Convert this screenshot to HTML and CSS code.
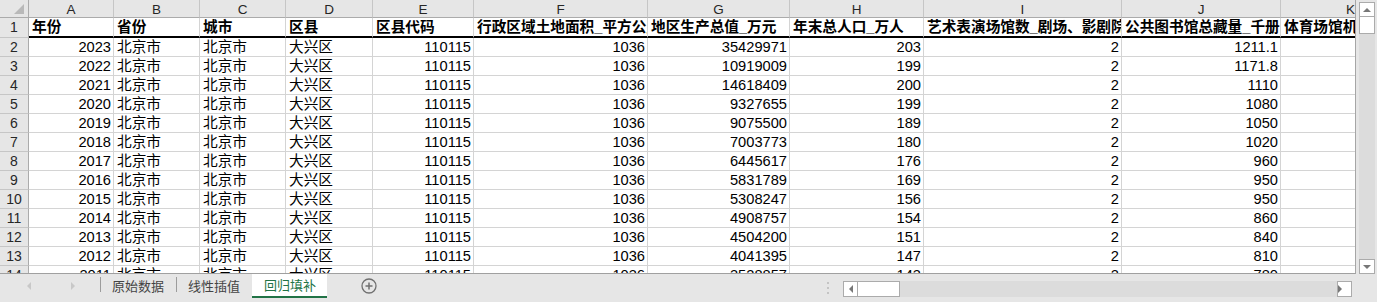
FILE: index.html
```html
<!DOCTYPE html>
<html lang="zh-CN">
<head>
<meta charset="UTF-8" />
<meta name="viewport" content="width=device-width,initial-scale=1.0" />
<title>回归填补</title>
<link rel="stylesheet" href="styles.css">
</head>
<body>
  <div class="main">
    <div class="grid" id="grid">
      <div class="row colhdr" id="colhdr">
        <div class="corner"><span class="tri"></span></div>
      </div>
    </div>
    <div class="vscroll">
      <div class="vtrack">
        <div class="sbtn"><span class="arr up"></span></div>
        <div class="vthumb"></div>
        <div class="fill"></div>
        <div class="sbtn"><span class="arr down"></span></div>
      </div>
    </div>
  </div>

  <div class="tabbar">
    <div class="nav">
      <span class="arr left dim"></span>
      <span class="arr right dim"></span>
    </div>
    <div class="sep"></div>
    <div class="tab">原始数据</div>
    <div class="sep"></div>
    <div class="tab">线性插值</div>
    <div class="tab active">回归填补</div>
    <div class="add">
      <svg width="16" height="16" viewBox="0 0 16 16">
        <circle cx="8" cy="8" r="7" fill="none" stroke="#707070" stroke-width="1.3"/>
        <path d="M8 4.5v7M4.5 8h7" stroke="#707070" stroke-width="1.5"/>
      </svg>
    </div>
    <div class="right">
      <div class="dots"><i></i><i></i><i></i></div>
      <div class="hscroll">
        <div class="sbtn"><span class="arr left"></span></div>
        <div class="hthumb"></div>
        <div class="fill"></div>
        <div class="sbtn"><span class="arr right"></span></div>
      </div>
    </div>
  </div>

<script>
  const letters = ['A','B','C','D','E','F','G','H','I','J','K'];
  const heads = ['年份','省份','城市','区县','区县代码','行政区域土地面积_平方公里','地区生产总值_万元',
    '年末总人口_万人','艺术表演场馆数_剧场、影剧院数_个','公共图书馆总藏量_千册','体育场馆机构数_个'];
  // 年份, 地区生产总值, 总人口, 图书馆藏量
  const data = [
    [2023, 35429971, 203, '1211.1'],
    [2022, 10919009, 199, '1171.8'],
    [2021, 14618409, 200, 1110],
    [2020, 9327655, 199, 1080],
    [2019, 9075500, 189, 1050],
    [2018, 7003773, 180, 1020],
    [2017, 6445617, 176, 960],
    [2016, 5831789, 169, 950],
    [2015, 5308247, 156, 950],
    [2014, 4908757, 154, 860],
    [2013, 4504200, 151, 840],
    [2012, 4041395, 147, 810],
    [2011, 3528857, 143, 780]
  ];

  const grid = document.getElementById('grid');
  const colhdr = document.getElementById('colhdr');

  function cell(text, cls) {
    const d = document.createElement('div');
    d.className = cls;
    d.textContent = text;
    return d;
  }

  letters.forEach(l => colhdr.appendChild(cell(l, 'ch')));

  const head = document.createElement('div');
  head.className = 'row first';
  head.appendChild(cell(1, 'rh'));
  heads.forEach(h => head.appendChild(cell(h, 'c hd')));
  grid.appendChild(head);

  data.forEach((r, i) => {
    const row = document.createElement('div');
    row.className = 'row';
    row.appendChild(cell(i + 2, 'rh'));
    const vals = [r[0], '北京市', '北京市', '大兴区', 110115, 1036, r[1], r[2], 2, r[3], ''];
    vals.forEach(v => row.appendChild(cell(v, typeof v === 'string' && isNaN(v) ? 'c' : 'c num')));
    grid.appendChild(row);
  });
</script>
</body>
</html>
```

FILE: styles.css
```css
* { box-sizing:border-box; }
body { margin:0; width:1377px; height:302px; overflow:hidden; background:#e6e6e6; font-family:"Liberation Sans", "Noto Sans CJK SC", sans-serif; color:#000; }

.main { display:flex; height:274px; }
.grid { flex:1; overflow:hidden; background:#fff; border-right:1px solid #a6a6a6; border-bottom:1px solid #a0a0a0; }
.row { display:grid; grid-template-columns:29px 85px 86px 86px 87px 101px 174px 142px 134px 198px 159px 140px; height:19px; }
.row > div { border-right:1px solid #d4d4d4; border-bottom:1px solid #d4d4d4; overflow:hidden; white-space:nowrap; }
.row.colhdr { height:18px; }
.row.first { height:20px; }

.row .corner { position:relative; background:#e6e6e6; border-right-color:#ababab; border-bottom-color:#ababab; }
.tri { position:absolute; right:4px; bottom:3px; width:0; height:0; border-left:10px solid transparent; border-bottom:10px solid #b9b9b9; }
.row .ch { background:#e6e6e6; border-right-color:#c6c6c6; border-bottom-color:#ababab; text-align:center; font-size:13.5px; line-height:19px; color:#262626; }
.row .rh { background:#e6e6e6; border-right-color:#ababab; border-bottom-color:#c6c6c6; text-align:center; font-size:14px; line-height:19px; color:#262626; }

.c { padding:0 2px 0 3px; font-size:14.67px; line-height:18px; }
.num { text-align:right; }
.row .hd { font-weight:700; border-bottom:2px solid #000; }

.vscroll { width:21px; padding:2px 2px 0 3px; background:#e6e6e6; }
.vtrack { height:100%; display:flex; flex-direction:column; background:#dcdcdc; }
.vscroll .sbtn { height:15px; }
.vthumb { height:17px; background:#fff; border:1px solid #ababab; border-top:none; }
.fill { flex:1; }
.sbtn { display:grid; place-items:center; background:#fff; border:1px solid #ababab; }

.arr { width:0; height:0; border:4px solid transparent; }
.arr.up { border-bottom-color:#777; border-top-width:0; }
.arr.down { border-top-color:#777; border-bottom-width:0; }
.arr.left { border-right-color:#777; border-left-width:0; }
.arr.right { border-left-color:#777; border-right-width:0; }
.arr.dim.left { border-right-color:#c8c8c8; }
.arr.dim.right { border-left-color:#c8c8c8; }

.tabbar { display:flex; height:28px; font-family:"Liberation Sans", "Noto Sans CJK SC", sans-serif; }
.nav { width:100px; display:flex; align-items:center; gap:24px; padding:0 0 4px 27px; }
.sep { width:1px; height:15px; margin-top:3px; background:#9c9c9c; }
.tab { height:24px; padding:0 12px 0 11px; font-size:13px; line-height:25px; color:#444; }
.tab.active { padding:0 11px 0 12px; background:#fff; color:#217346; border-bottom:2px solid #217346; line-height:23px; }
.add { display:flex; align-items:center; height:24px; margin-left:34px; }

.right { margin-left:auto; display:flex; align-items:flex-start; padding-right:25px; }
.dots { display:flex; flex-direction:column; gap:3px; margin:8px 14px 0 0; }
.dots i { display:block; width:2px; height:2px; background:#c4c4c4; }
.hscroll { width:509px; height:16px; margin-top:7px; display:flex; background:#dcdcdc; }
.hscroll .sbtn { width:15px; }
.hthumb { width:42px; background:#fff; border:1px solid #ababab; border-left:none; }
```
